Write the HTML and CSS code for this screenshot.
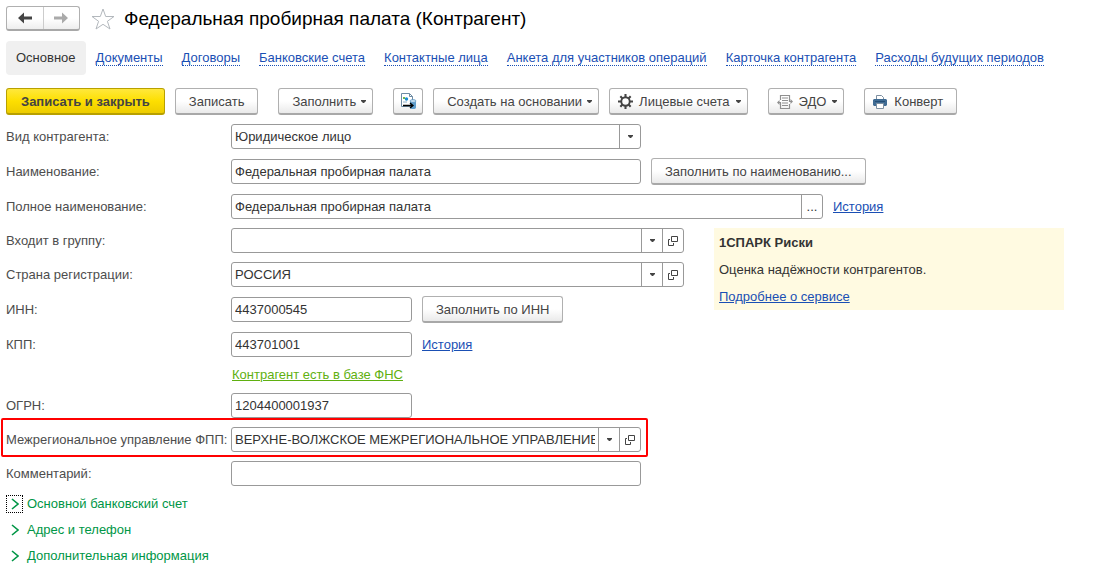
FILE: index.html
```html
<!DOCTYPE html>
<html lang="ru">
<head>
<meta charset="utf-8">
<meta name="viewport" content="width=device-width, initial-scale=1">
<title>Федеральная пробирная палата (Контрагент)</title>
<link rel="stylesheet" href="styles.css">
</head>
<body>
<svg class="sprite" aria-hidden="true">
  <symbol id="i-caret" viewBox="0 0 5 3"><path d="M0 0h5v1L3 3H2L0 1z" fill="#444"/></symbol>
  <symbol id="i-open" viewBox="0 0 10 10"><path d="M3.500.5h6v5h-6zM2 3.500H.5v6h5V7" fill="none" stroke="#444"/></symbol>
  <symbol id="i-chevron" viewBox="0 0 8 12"><path d="M1 1l6 5-6 5" fill="none" stroke="#009646" stroke-width="1.600"/></symbol>
</svg>

<header class="header">
  <div class="history">
    <button type="button" class="history-btn" aria-label="Назад"><svg width="14" height="12" viewBox="0 0 14 12"><path d="M0 6l6-5.500v4h8v3H6v4z" fill="#444"/></svg></button>
    <button type="button" class="history-btn" aria-label="Вперёд"><svg width="14" height="12" viewBox="0 0 14 12"><path d="M14 6L8 .5v4H0v3h8v4z" fill="#aaa"/></svg></button>
  </div>
  <button type="button" class="star" aria-label="Избранное"><svg width="24" height="22" viewBox="0 0 24 22"><path d="M12 1l2.700 7.500H23l-6.600 4.800L19 21l-7-4.700L5 21l2.600-7.700L1 8.500h8.300z" fill="#fff" stroke="#b3b8bd"/></svg></button>
  <h1 class="title">Федеральная пробирная палата (Контрагент)</h1>
</header>

<nav class="tabs">
  <a class="tab tab-current" href="#main" aria-current="page">Основное</a>
  <a class="tab" href="#docs">Документы</a>
  <a class="tab" href="#contracts">Договоры</a>
  <a class="tab" href="#accounts">Банковские счета</a>
  <a class="tab" href="#contacts">Контактные лица</a>
  <a class="tab" href="#survey">Анкета для участников операций</a>
  <a class="tab" href="#card">Карточка контрагента</a>
  <a class="tab" href="#expenses">Расходы будущих периодов</a>
</nav>

<div class="toolbar">
  <button type="button" class="btn btn-primary">Записать и закрыть</button>
  <button type="button" class="btn">Записать</button>
  <button type="button" class="btn btn-menu btn-apart">Заполнить<svg class="caret"><use href="#i-caret"/></svg></button>
  <button type="button" class="btn btn-icon btn-apart" aria-label="Файлы"><svg width="17" height="17" viewBox="0 0 17 17"><path d="M1.500.5h8l3 3v10h-11z" fill="#fff" stroke="#6d8ba3"/><path d="M9.500.5v3h3" fill="none" stroke="#6d8ba3"/><path d="M3 4h2v2H3z" fill="#6fb64a"/><circle cx="6.500" cy="6" r="1.700" fill="#1c8ed1"/><path d="M3 9h4" stroke="#8fb0c8"/><path d="M10 8v6.500c0 2 6 2 6 0V8z" fill="#5f9dcb"/><ellipse cx="13" cy="8" rx="3" ry="1.500" fill="#c4def0" stroke="#4a88b8" stroke-width=".6"/><path d="M3 12.500h9M10 10l3 2.500-3 2.500" fill="none" stroke="#000" stroke-width="1.300"/></svg></button>
  <button type="button" class="btn btn-menu">Создать на основании<svg class="caret"><use href="#i-caret"/></svg></button>
  <button type="button" class="btn btn-menu btn-lead"><svg width="15" height="15" viewBox="0 0 16 16"><circle cx="8" cy="8" r="4.500" fill="none" stroke="#444" stroke-width="2"/><path d="M8 0v3.500M8 12.500V16M0 8h3.500M12.500 8H16M2.500 2.500L5 5M11 11l2.500 2.500M13.500 2.500L11 5M5 11l-2.500 2.500" stroke="#444" stroke-width="2.200"/></svg>Лицевые счета<svg class="caret"><use href="#i-caret"/></svg></button>
  <button type="button" class="btn btn-menu btn-lead btn-apart"><svg width="16" height="14" viewBox="0 0 16 14"><path d="M3.500 5V.5h9v6H15M12.500 9v4.500h-9v-6H1M5 3h6M5 5.500h6M5 8h6M5 10.500h6" fill="none" stroke="#909090" stroke-width="1.200"/><path d="M0 7.500L2.500 5v5zM16 6.500L13.500 4v5z" fill="#909090"/></svg>ЭДО<svg class="caret"><use href="#i-caret"/></svg></button>
  <button type="button" class="btn btn-lead btn-apart"><svg width="14" height="14" viewBox="0 0 14 14"><path d="M3.500 5V.5h5l2 2V5" fill="#fff" stroke="#7d8fa0"/><path d="M1 4h12l1 1v5l-1 1H1l-1-1V5z" fill="#3f6b93"/><path d="M2 6.500h10" stroke="#234d75"/><path d="M3.500 8.500h7v5h-7z" fill="#fff" stroke="#7d8fa0"/></svg>Конверт</button>
</div>

<form class="form">
  <div class="row">
    <label for="kind">Вид контрагента:</label>
    <div class="combo w-m"><select id="kind"><option>Юридическое лицо</option></select><span class="combo-end"><svg class="caret"><use href="#i-caret"/></svg></span></div>
  </div>
  <div class="row">
    <label for="name">Наименование:</label>
    <div class="combo w-m"><input id="name" type="text" value="Федеральная пробирная палата"></div>
    <button type="button" class="btn">Заполнить по наименованию...</button>
  </div>
  <div class="row">
    <label for="fullname">Полное наименование:</label>
    <div class="combo w-xl"><input id="fullname" type="text" value="Федеральная пробирная палата"><button type="button" class="combo-btn" aria-label="Изменить">...</button></div>
    <a class="link" href="#name-history">История</a>
  </div>

  <div class="split">
    <div class="fields">
      <div class="row">
        <label for="group">Входит в группу:</label>
        <div class="combo w-l"><input id="group" type="text"><button type="button" class="combo-btn" aria-label="Выбрать"><svg class="caret"><use href="#i-caret"/></svg></button><button type="button" class="combo-btn" aria-label="Открыть"><svg class="open"><use href="#i-open"/></svg></button></div>
      </div>
      <div class="row">
        <label for="country">Страна регистрации:</label>
        <div class="combo w-l"><input id="country" type="text" value="РОССИЯ"><button type="button" class="combo-btn" aria-label="Выбрать"><svg class="caret"><use href="#i-caret"/></svg></button><button type="button" class="combo-btn" aria-label="Открыть"><svg class="open"><use href="#i-open"/></svg></button></div>
      </div>
      <div class="row">
        <label for="inn">ИНН:</label>
        <div class="combo w-s"><input id="inn" type="text" value="4437000545"></div>
        <button type="button" class="btn">Заполнить по ИНН</button>
      </div>
      <div class="row">
        <label for="kpp">КПП:</label>
        <div class="combo w-s"><input id="kpp" type="text" value="443701001"></div>
        <a class="link" href="#kpp-history">История</a>
      </div>
      <div class="row row-note">
        <a class="link link-ok" href="#fns">Контрагент есть в базе ФНС</a>
      </div>
      <div class="row">
        <label for="ogrn">ОГРН:</label>
        <div class="combo w-s"><input id="ogrn" type="text" value="1204400001937"></div>
      </div>
      <div class="row row-marked">
        <label for="office">Межрегиональное управление ФПП:</label>
        <div class="combo w-m"><input id="office" type="text" value="ВЕРХНЕ-ВОЛЖСКОЕ МЕЖРЕГИОНАЛЬНОЕ УПРАВЛЕНИЕ"><button type="button" class="combo-btn" aria-label="Выбрать"><svg class="caret"><use href="#i-caret"/></svg></button><button type="button" class="combo-btn" aria-label="Открыть"><svg class="open"><use href="#i-open"/></svg></button></div>
      </div>
      <div class="row">
        <label for="comment">Комментарий:</label>
        <div class="combo w-m"><input id="comment" type="text"></div>
      </div>
    </div>
    <aside class="spark">
      <h2>1СПАРК Риски</h2>
      <p>Оценка надёжности контрагентов.</p>
      <a class="link" href="#spark">Подробнее о сервисе</a>
    </aside>
  </div>
</form>

<div class="groups">
  <button type="button" class="group"><span class="mark mark-focus"><svg class="chevron"><use href="#i-chevron"/></svg></span>Основной банковский счет</button>
  <button type="button" class="group"><span class="mark"><svg class="chevron"><use href="#i-chevron"/></svg></span>Адрес и телефон</button>
  <button type="button" class="group"><span class="mark"><svg class="chevron"><use href="#i-chevron"/></svg></span>Дополнительная информация</button>
</div>
</body>
</html>
```
FILE: styles.css
```css
* {
  box-sizing: border-box;
}

body {
  margin: 0;
  padding: 6px;
  background: #fff;
  color: #333;
  font: 13px/18px "Liberation Sans", Arial, sans-serif;
}

button,
input,
select {
  font: inherit;
  color: inherit;
}

button {
  cursor: pointer;
}

svg {
  display: block;
  flex: none;
}

.sprite {
  display: none;
}

.caret {
  width: 5px;
  height: 3px;
}

.open {
  width: 10px;
  height: 10px;
}

.chevron {
  width: 8px;
  height: 12px;
}

/* Header */
.header {
  display: flex;
  align-items: center;
  height: 25px;
}

.history {
  display: flex;
  width: 74px;
  height: 25px;
  border: 1px solid #b0b0b0;
  border-bottom: 2px solid #a8a8a8;
  border-radius: 3px;
  background: linear-gradient(#fff 50%, #eee);
}

.history-btn {
  display: flex;
  flex: 1;
  align-items: center;
  justify-content: center;
  padding: 0;
  border: 0;
  background: none;
}

.history-btn + .history-btn {
  border-left: 1px solid #ccc;
}

.star {
  margin: 0 9px 0 11px;
  padding: 0;
  border: 0;
  background: none;
}

.title {
  margin: 0;
  color: #000;
  font-size: 19px;
  font-weight: 400;
  line-height: 24px;
}

/* Section links */
.tabs {
  display: flex;
  align-items: center;
  gap: 19px;
  margin-top: 10px;
}

.tab {
  color: #1a4fb4;
  line-height: 14px;
  text-decoration: none;
  border-bottom: 1px dotted #1a4fb4;
  white-space: nowrap;
}

.tab-current {
  margin-right: -9px;
  padding: 10px;
  border: 0;
  border-radius: 4px;
  background: #f0f0f0;
  color: #333;
}

/* Buttons */
.toolbar {
  display: flex;
  align-items: center;
  gap: 10px;
  margin-top: 13px;
}

.btn {
  display: flex;
  flex: none;
  align-items: center;
  height: 27px;
  padding: 1px 13px 0;
  border: 1px solid #b0b0b0;
  border-bottom: 2px solid #a8a8a8;
  border-radius: 3px;
  background: linear-gradient(#fff 50%, #eaeaea);
  color: #444;
  white-space: nowrap;
}

.btn-primary {
  padding: 1px 14px 0;
  border-color: #b8a000;
  background: linear-gradient(#ffe83c, #fddf00 50%, #edcc00);
  font-weight: 700;
}

.btn-apart {
  margin-left: 10px;
}

.btn-menu {
  gap: 5px;
  padding-right: 6px;
}

.btn-lead {
  gap: 7px;
  padding-left: 8px;
}

.btn-menu.btn-lead {
  gap: 6px;
}

.btn-icon {
  justify-content: center;
  width: 30px;
  padding: 0;
}

/* Form */
.form,
.fields {
  display: flex;
  flex-direction: column;
  gap: 9px;
}

.form {
  margin-top: 9px;
}

.row {
  display: flex;
  align-items: center;
  gap: 10px;
}

.row label {
  width: 215px;
  color: #4d4d4d;
  white-space: nowrap;
}

.row-note {
  padding-left: 226px;
}

.row-marked {
  width: 647px;
  margin: -9px -5px -5px;
  padding: 7px 3px 3px;
  border: 2px solid #f00;
  border-radius: 2px;
}

.combo {
  display: flex;
  height: 25px;
  border: 1px solid #999;
  border-radius: 3px;
  background: #fff;
}

.w-s {
  width: 181px;
}

.w-m {
  width: 410px;
}

.w-l {
  width: 453px;
}

.w-xl {
  width: 592px;
}

.combo input,
.combo select {
  flex: 1;
  min-width: 0;
  padding: 0 3px;
  border: 0;
  background: none;
  appearance: none;
}

.combo-btn,
.combo-end {
  display: flex;
  flex: none;
  align-items: center;
  justify-content: center;
  width: 21px;
  padding: 0;
  border: 0;
  border-left: 1px solid #999;
  background: none;
}

.link {
  color: #1a4fb4;
  text-decoration: underline;
}

.link-ok {
  color: #5fb010;
}

.split {
  display: flex;
  align-items: flex-start;
  gap: 30px;
}

.spark {
  flex: 0 1 350px;
  padding: 6px 5px 4px;
  background: #fffae1;
}

.spark h2,
.spark p {
  margin: 0 0 9px;
  font-size: 13px;
  line-height: 18px;
}

/* Collapsed groups */
.groups {
  display: flex;
  flex-direction: column;
  align-items: flex-start;
  gap: 8px;
  margin-top: 9px;
}

.group {
  display: flex;
  align-items: center;
  gap: 4px;
  padding: 0;
  border: 0;
  background: none;
  color: #009646;
}

.mark {
  display: flex;
  align-items: center;
  justify-content: center;
  width: 17px;
  height: 18px;
}

.mark-focus {
  border: 1px dotted #000;
}
```
